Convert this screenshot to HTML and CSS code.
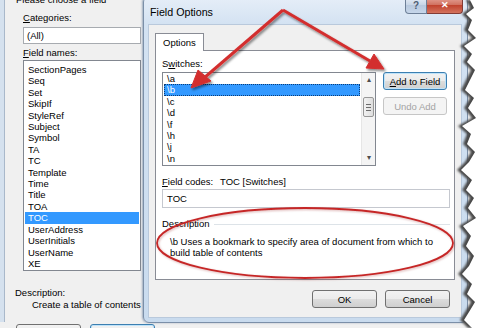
FILE: index.html
```html
<!DOCTYPE html>
<html lang="en">
<head>
    <meta charset="UTF-8">
    <title>Field Options</title>
    <link rel="stylesheet" href="styles.css">
</head>
<body>

<div class="screen">
    <!-- Field dialog behind -->
    <div class="back">
        <div class="back-frame"></div>
        <div class="prompt">Please choose a field</div>
        <div class="lbl gap-top"><u>C</u>ategories:</div>
        <div class="combo">(All)</div>
        <div class="lbl gap-sm"><u>F</u>ield names:</div>
        <div class="listbox names">
            <div class="item">SectionPages</div>
            <div class="item">Seq</div>
            <div class="item">Set</div>
            <div class="item">SkipIf</div>
            <div class="item">StyleRef</div>
            <div class="item">Subject</div>
            <div class="item">Symbol</div>
            <div class="item">TA</div>
            <div class="item">TC</div>
            <div class="item">Template</div>
            <div class="item">Time</div>
            <div class="item">Title</div>
            <div class="item">TOA</div>
            <div class="item selected">TOC</div>
            <div class="item">UserAddress</div>
            <div class="item">UserInitials</div>
            <div class="item">UserName</div>
            <div class="item">XE</div>
        </div>
        <div class="back-desc">Description:</div>
        <div class="back-desc-text">Create a table of contents</div>
        <div class="back-buttons">
            <span class="btn"></span>
            <span class="btn default"></span>
        </div>
    </div>

    <!-- Field Options dialog -->
    <div class="dlg">
        <div class="titlebar">
            <span class="title">Field Options</span>
            <div class="caption-btns">
                <span class="cap help">?</span>
                <span class="cap close">&#x2715;</span>
            </div>
        </div>
        <div class="client">
            <div class="tabs"><div class="tab">Options</div></div>
            <div class="panel">
                <div class="lbl">S<u>w</u>itches:</div>
                <div class="switch-row">
                    <div class="listbox switches">
                        <div class="items">
                            <div class="item">\a</div>
                            <div class="item selected">\b</div>
                            <div class="item">\c</div>
                            <div class="item">\d</div>
                            <div class="item">\f</div>
                            <div class="item">\h</div>
                            <div class="item">\j</div>
                            <div class="item">\n</div>
                        </div>
                        <div class="scrollbar">
                            <span class="arrow">&#x25B4;</span>
                            <span class="track"><span class="thumb"><i></i><i></i><i></i></span></span>
                            <span class="arrow">&#x25BE;</span>
                        </div>
                    </div>
                    <div class="side-btns">
                        <span class="btn default"><u>A</u>dd to Field</span>
                        <span class="btn disabled">Undo Add</span>
                    </div>
                </div>
                <div class="codes"><span class="codes-lbl"><u>F</u>ield codes:</span>TOC [Switches]</div>
                <div class="textbox">TOC</div>
                <div class="desc-head"><span>Description</span><span class="rule"></span></div>
                <p class="desc">\b Uses a bookmark to specify area of document from which to build table of contents</p>
            </div>
            <div class="footer">
                <span class="btn">OK</span>
                <span class="btn">Cancel</span>
            </div>
        </div>
    </div>

    <!-- annotations -->
    <svg class="marks" width="480" height="328" viewBox="0 0 480 328">
        <defs>
            <filter id="shadow" x="-10%" y="-10%" width="120%" height="120%">
                <feDropShadow dx="1.5" dy="2" stdDeviation="1" flood-color="#000" flood-opacity="0.45"/>
            </filter>
            <filter id="soft" x="-5%" y="-5%" width="110%" height="110%">
                <feDropShadow dx="1" dy="1" stdDeviation="1" flood-color="#800" flood-opacity="0.3"/>
            </filter>
        </defs>
        <ellipse cx="305" cy="243" rx="148" ry="35" fill="none" stroke="#c62828" stroke-width="1.8" filter="url(#soft)"/>
        <g filter="url(#shadow)" fill="#d32f2f" stroke="#d32f2f" stroke-linejoin="round">
            <path d="M283 10 L204 78" fill="none" stroke-width="3"/>
            <polygon points="191,88 211,81 198,70"/>
            <path d="M283 10 L370 61" fill="none" stroke-width="3"/>
            <polygon points="384,69 366,68 374,54"/>
        </g>
    </svg>

    <!-- torn right edge -->
    <svg class="torn" width="480" height="328" viewBox="0 0 480 328">
        <defs>
            <filter id="blur"><feGaussianBlur stdDeviation="1.2"/></filter>
        </defs>
        <polygon fill="#4a4a4a" filter="url(#blur)" points="466,0 470,8 462,14 468,20 464,30 472,38 460,46 468,54 463,62 471,70 466,80 461,90 470,98 464,108 472,118 458,126 467,134 463,144 471,152 465,162 457,170 468,180 462,190 470,198 464,208 472,218 459,226 467,236 462,246 470,256 465,266 458,274 468,284 463,294 471,302 465,312 460,320 468,328 480,328 480,0"/>
        <polygon fill="#ffffff" points="470,0 474,8 466,14 472,20 468,30 476,38 464,46 472,54 467,62 475,70 470,80 465,90 474,98 468,108 476,118 462,126 471,134 467,144 475,152 469,162 461,170 472,180 466,190 474,198 468,208 476,218 463,226 471,236 466,246 474,256 469,266 462,274 472,284 467,294 475,302 469,312 464,320 472,328 480,328 480,0"/>
    </svg>
</div>

</body>
</html>
```

FILE: styles.css
```css
body {
    margin: 0;
    background: #ffffff;
    font-family: "Liberation Sans", Arial, sans-serif;
    font-size: 9.5px;
    color: #000;
}

.screen {
    position: relative;
    width: 480px;
    height: 328px;
    overflow: hidden;
    background: #f0f0f0;
}

u {
    text-decoration: underline;
}

/* ---------- back dialog ---------- */

.back {
    position: relative;
    padding-left: 23px;
    width: 200px;
}

.back-frame {
    position: absolute;
    left: 0;
    top: 0;
    width: 4px;
    height: 328px;
    background: #d5e1ee;
    border-right: 1px solid #a9b8ca;
}

.prompt {
    margin: -6px 0 0 -7px;
    line-height: 12px;
}

.lbl {
    line-height: 12px;
}

.gap-top {
    margin-top: 6px;
}

.gap-sm {
    margin-top: 3px;
}

.combo {
    box-sizing: border-box;
    margin-top: 3px;
    width: 118px;
    height: 17px;
    padding-left: 3px;
    line-height: 15px;
    background: #fff;
    border: 1px solid #a7abb0;
}

.listbox {
    box-sizing: border-box;
    background: #fff;
    border: 1px solid #828790;
}

.names {
    margin-top: 1px;
    width: 118px;
    height: 211px;
    padding-top: 3px;
}

.item {
    line-height: 11.4px;
    padding-left: 3px;
    margin: 0 1px;
}

.item.selected {
    background: #3399ff;
    color: #fff;
}

.back-desc {
    margin: 16px 0 0 -8px;
    line-height: 12px;
}

.back-desc-text {
    margin-left: 9px;
    line-height: 12px;
}

.back-buttons {
    display: flex;
    gap: 9px;
    margin: 13px 0 0 -7px;
}

.back-buttons .btn {
    width: 65px;
    height: 21px;
}

/* ---------- buttons ---------- */

.btn {
    box-sizing: border-box;
    display: flex;
    align-items: center;
    justify-content: center;
    height: 18px;
    border: 1px solid #707070;
    border-radius: 3px;
    background: linear-gradient(#f2f2f2, #ebebeb 50%, #dddddd 50%, #cfcfcf);
}

.btn.default {
    border-color: #3c7fb1;
    box-shadow: inset 0 0 0 1px #bfe3f9;
}

.btn.disabled {
    color: #a3a3a3;
    border-color: #c6c6c6;
    background: #f4f4f4;
}

/* ---------- Field Options dialog ---------- */

.dlg {
    position: absolute;
    left: 143px;
    top: -4px;
    box-sizing: border-box;
    width: 325px;
    height: 327px;
    padding: 0 5px 5px 4px;
    border: 1px solid #7b8fa8;
    border-radius: 6px;
    background: linear-gradient(#e6eef8, #d3e2f2 28px, #c9dbee);
    box-shadow: -1px 0 2px rgba(60, 90, 130, 0.45);
}

.titlebar {
    display: flex;
    height: 27px;
}

.title {
    padding: 8px 0 0 2px;
    line-height: 14px;
    font-size: 10.7px;
}

.caption-btns {
    display: flex;
    margin-left: auto;
    margin-right: -1px;
    height: 17px;
}

.cap {
    box-sizing: border-box;
    display: flex;
    align-items: center;
    justify-content: center;
    height: 17px;
    border: 1px solid #6d7f97;
    border-top: none;
    font-weight: bold;
    color: #fff;
}

.help {
    width: 22px;
    border-radius: 0 0 0 4px;
    background: linear-gradient(#e9eff7, #c7d5e6 50%, #b7c8dd 50%, #c6d6ea);
    color: #4e5d73;
    font-size: 10px;
}

.close {
    width: 36px;
    border-left: none;
    border-color: #833b35;
    border-radius: 0 0 4px 0;
    background: linear-gradient(#e7a79c, #d0705f 50%, #c0402c 50%, #d4735e);
    font-size: 9px;
}

.client {
    box-sizing: border-box;
    height: 294px;
    padding: 8px 6px 0 6px;
    background: #f0f0f0;
    border: 1px solid #b9c9dc;
}

.tabs {
    display: flex;
}

.tab {
    position: relative;
    box-sizing: border-box;
    height: 18px;
    margin-bottom: -1px;
    padding: 0 7px;
    line-height: 17px;
    background: #fff;
    border: 1px solid #898c95;
    border-bottom: none;
}

.panel {
    box-sizing: border-box;
    width: 300px;
    height: 230px;
    padding: 7px 4px 0 6px;
    background: #fff;
    border: 1px solid #898c95;
}

.switch-row {
    display: flex;
    gap: 7px;
    margin-top: 2px;
}

.switches {
    display: flex;
    width: 214px;
    height: 94px;
}

.switches .items {
    flex: 1;
}

.switches .item.selected {
    outline: 1px dotted #0b3d77;
    outline-offset: -1px;
}

.scrollbar {
    display: flex;
    flex-direction: column;
    width: 13px;
    background: #f4f4f4;
    border-left: 1px solid #e6e6e6;
}

.arrow {
    height: 14px;
    line-height: 14px;
    text-align: center;
    font-size: 8px;
    color: #4d4d4d;
}

.track {
    flex: 1;
    padding-top: 10px;
}

.thumb {
    box-sizing: border-box;
    display: flex;
    flex-direction: column;
    align-items: center;
    justify-content: center;
    gap: 2px;
    height: 20px;
    margin: 0 1px;
    border: 1px solid #979797;
    border-radius: 2px;
    background: linear-gradient(to right, #f1f1f1, #dedede);
}

.thumb i {
    width: 5px;
    height: 1px;
    background: #6b6b6b;
}

.side-btns {
    display: flex;
    flex-direction: column;
    gap: 7px;
    width: 64px;
}

.codes {
    margin-top: 10px;
    line-height: 12px;
}

.codes-lbl {
    display: inline-block;
    width: 58px;
}

.textbox {
    box-sizing: border-box;
    margin-top: 1px;
    width: 288px;
    height: 19px;
    padding-left: 4px;
    line-height: 17px;
    border: 1px solid #c5c8cf;
}

.desc-head {
    display: flex;
    align-items: center;
    gap: 4px;
    margin-top: 10px;
    line-height: 12px;
}

.desc-head .rule {
    flex: 1;
    height: 1px;
    background: #dde3e8;
}

.desc {
    margin: 6px 0 0 0;
    padding-left: 8px;
    width: 272px;
    line-height: 11.4px;
}

.footer {
    display: flex;
    justify-content: flex-end;
    gap: 8px;
    padding-top: 10px;
    margin-right: 5px;
}

.footer .btn {
    width: 65px;
}

/* ---------- overlays ---------- */

.marks,
.torn {
    position: absolute;
    left: 0;
    top: 0;
}
```
